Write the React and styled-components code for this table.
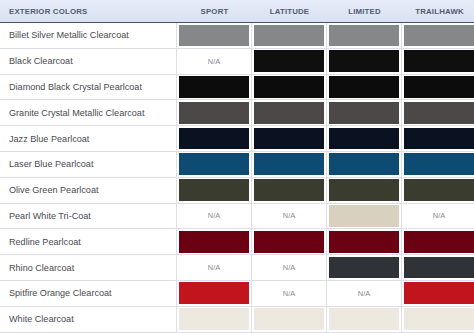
import React from 'react'
import styled, { createGlobalStyle } from 'styled-components'

const GlobalStyle = createGlobalStyle`
  html, body {
    margin: 0;
    padding: 0;
    background: #fff;
    overflow: hidden;
  }
  body {
    font-family: 'Liberation Sans', Arial, sans-serif;
  }
`

const TRIMS = ['Sport', 'Latitude', 'Limited', 'Trailhawk']

// 0 = N/A for that trim
const COLORS = [
  { name: 'Billet Silver Metallic Clearcoat', hex: '#868788', avail: [1, 1, 1, 1] },
  { name: 'Black Clearcoat', hex: '#0f0f0f', avail: [0, 1, 1, 1] },
  { name: 'Diamond Black Crystal Pearlcoat', hex: '#0c0c0c', avail: [1, 1, 1, 1] },
  { name: 'Granite Crystal Metallic Clearcoat', hex: '#4b4847', avail: [1, 1, 1, 1] },
  { name: 'Jazz Blue Pearlcoat', hex: '#0a1222', avail: [1, 1, 1, 1] },
  { name: 'Laser Blue Pearlcoat', hex: '#0e4b72', avail: [1, 1, 1, 1] },
  { name: 'Olive Green Pearlcoat', hex: '#3a3c30', avail: [1, 1, 1, 1] },
  { name: 'Pearl White Tri-Coat', hex: '#d8d1bf', avail: [0, 0, 1, 0] },
  { name: 'Redline Pearlcoat', hex: '#6b0013', avail: [1, 1, 1, 1] },
  { name: 'Rhino Clearcoat', hex: '#2f3237', avail: [0, 0, 1, 1] },
  { name: 'Spitfire Orange Clearcoat', hex: '#c1141c', avail: [1, 0, 0, 1] },
  { name: 'White Clearcoat', hex: '#ede9e0', avail: [1, 1, 1, 1] },
]

const App = () => {
  return (
    <>
      <GlobalStyle />
      <Table>
        <HeadRow>
          <HeadCell $first>Exterior Colors</HeadCell>
          {TRIMS.map((t) => (
            <HeadCell key={t}>{t}</HeadCell>
          ))}
        </HeadRow>
        {COLORS.map((c) => (
          <Row key={c.name}>
            <NameCell>{c.name}</NameCell>
            {c.avail.map((a, i) => (
              <SwatchCell key={i}>
                {a ? <Swatch $color={c.hex} /> : <NA>N/A</NA>}
              </SwatchCell>
            ))}
          </Row>
        ))}
      </Table>
    </>
  )
}

const Table = styled.div`
  width: 477px;
  display: flex;
  flex-direction: column;
`

const HeadRow = styled.div`
  display: grid;
  grid-template-columns: 177px repeat(4, 75px);
  height: 22px;
  background: linear-gradient(#e6ecf7, #d9e2f1);
  border-bottom: 1.5px solid #46506e;
`

const HeadCell = styled.div`
  display: flex;
  align-items: center;
  justify-content: ${(p) => (p.$first ? 'flex-start' : 'center')};
  padding-left: ${(p) => (p.$first ? '9px' : '0')};
  font-size: 7.8px;
  font-weight: bold;
  letter-spacing: 0.2px;
  text-transform: uppercase;
  color: #535b72;
`

const Row = styled.div`
  display: grid;
  grid-template-columns: 177px repeat(4, 75px);
  height: 25.8px;
  box-sizing: border-box;
  border-bottom: 1px solid #dcdfe5;
`

const NameCell = styled.div`
  display: flex;
  align-items: center;
  padding-left: 9px;
  font-size: 9.1px;
  color: #4a4a50;
  border-right: 1px solid #dcdfe5;
`

const SwatchCell = styled.div`
  display: flex;
  align-items: center;
  justify-content: center;
  padding: 1.5px 2px;
  border-right: 1px solid #dcdfe5;
`

const Swatch = styled.div`
  width: 100%;
  height: 100%;
  background: ${(p) => p.$color};
`

const NA = styled.span`
  font-size: 7.4px;
  color: #8a8a8e;
`

export default App
